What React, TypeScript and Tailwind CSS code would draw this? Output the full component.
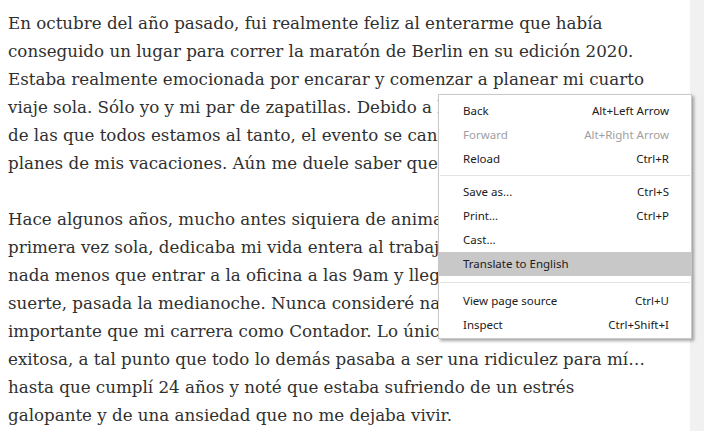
import React from "react";

const p1 = [
  "En octubre del año pasado, fui realmente feliz al enterarme que había",
  "conseguido un lugar para correr la maratón de Berlin en su edición 2020.",
  "Estaba realmente emocionada por encarar y comenzar a planear mi cuarto",
  "viaje sola. Sólo yo y mi par de zapatillas. Debido a l",
  "de las que todos estamos al tanto, el evento se canc",
  "planes de mis vacaciones. Aún me duele saber que",
];

const p2 = [
  "Hace algunos años, mucho antes siquiera de anima",
  "primera vez sola, dedicaba mi vida entera al trabaj",
  "nada menos que entrar a la oficina a las 9am y lleg",
  "suerte, pasada la medianoche. Nunca consideré na",
  "importante que mi carrera como Contador. Lo únic",
  "exitosa, a tal punto que todo lo demás pasaba a ser una ridiculez para mí…",
  "hasta que cumplí 24 años y noté que estaba sufriendo de un estrés",
  "galopante y de una ansiedad que no me dejaba vivir.",
];

type Item =
  | { label: string; shortcut?: string; disabled?: boolean; active?: boolean }
  | "sep1"
  | "sep2";

const items: Item[] = [
  { label: "Back", shortcut: "Alt+Left Arrow" },
  { label: "Forward", shortcut: "Alt+Right Arrow", disabled: true },
  { label: "Reload", shortcut: "Ctrl+R" },
  "sep1",
  { label: "Save as...", shortcut: "Ctrl+S" },
  { label: "Print...", shortcut: "Ctrl+P" },
  { label: "Cast..." },
  { label: "Translate to English", active: true },
  "sep2",
  { label: "View page source", shortcut: "Ctrl+U" },
  { label: "Inspect", shortcut: "Ctrl+Shift+I" },
];

export default function App() {
  return (
    <div className="relative flex h-[431px] w-[704px] overflow-hidden bg-white">
      <div
        className="flex-1 overflow-hidden pl-[8px] pt-[9px] text-[16.7px] leading-[28px] text-[#303030]"
        style={{ fontFamily: '"DejaVu Serif", serif' }}
      >
        <div className="mb-[28px]">
          {p1.map((l, i) => (
            <div key={i} className="whitespace-nowrap">{l}</div>
          ))}
        </div>
        <div>
          {p2.map((l, i) => (
            <div key={i} className="whitespace-nowrap">{l}</div>
          ))}
        </div>
      </div>
      <div className="w-[14px] bg-[#f1f1f1]" />

      <div
        className="absolute left-[438px] top-[94px] w-[254px] border border-[#c9c9c9] bg-white pt-[4px] pb-[1px] text-[11.5px] shadow-[2px_2px_3px_rgba(0,0,0,0.35)]"
        style={{ fontFamily: '"Noto Sans", sans-serif' }}
      >
        {items.map((it, i) =>
          it === "sep1" ? (
            <div key={i} className="mx-px my-[4px] h-px bg-[#e3e3e3]" />
          ) : it === "sep2" ? (
            <div key={i} className="mx-px my-[6px] h-px bg-[#e3e3e3]" />
          ) : (
            <div
              key={i}
              className={`flex h-[24px] items-center justify-between pl-[24px] pr-[22px] ${
                it.active ? "bg-[#c8c8c8]" : ""
              } ${it.disabled ? "text-[#a0a0a0]" : "text-[#202020]"}`}
            >
              <span>{it.label}</span>
              <span>{it.shortcut ?? ""}</span>
            </div>
          )
        )}
      </div>
    </div>
  );
}
